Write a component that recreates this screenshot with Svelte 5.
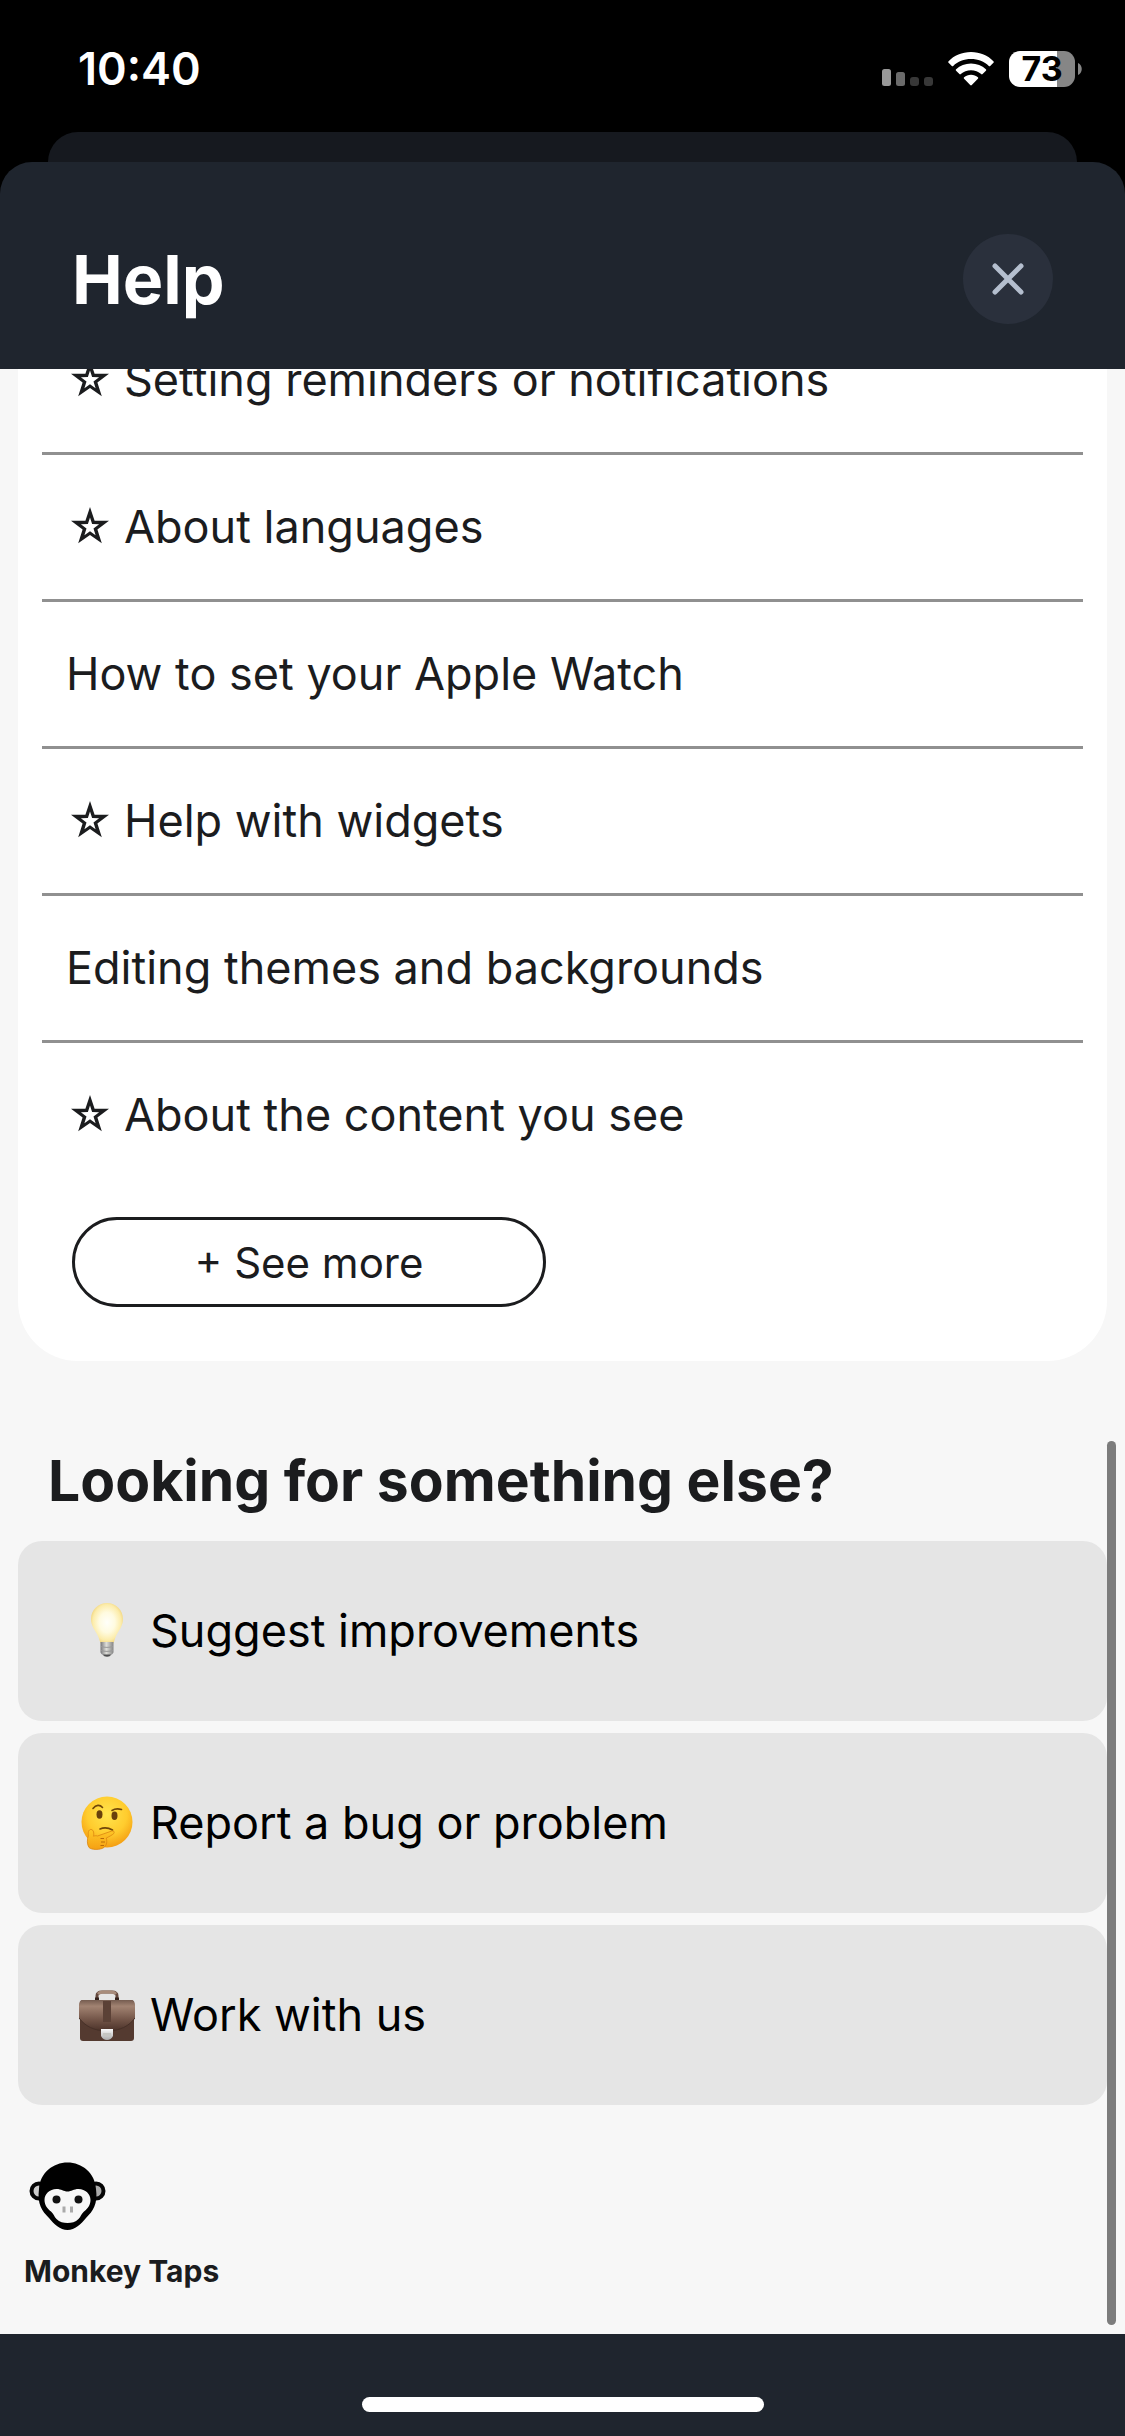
<script>
  const topics = [
    { label: 'Setting reminders or notifications', starred: true },
    { label: 'About languages', starred: true },
    { label: 'How to set your Apple Watch', starred: false },
    { label: 'Help with widgets', starred: true },
    { label: 'Editing themes and backgrounds', starred: false },
    { label: 'About the content you see', starred: true }
  ];
  const actions = [
    { label: 'Suggest improvements', icon: 'bulb' },
    { label: 'Report a bug or problem', icon: 'thinking' },
    { label: 'Work with us', icon: 'briefcase' }
  ];
</script>

<div class="screen">
  <div class="status">
    <time>10:40</time>
    <div class="indicators">
      <svg class="signal" viewBox="0 0 51 17" aria-hidden="true">
        <rect width="9" height="17" rx="2.5" fill="#999" />
        <rect x="14" y="3" width="9" height="14" rx="2.5" fill="#6b6b6b" />
        <rect x="28" y="8" width="9" height="9" rx="3" fill="#383838" />
        <rect x="42" y="8" width="9" height="9" rx="3" fill="#383838" />
      </svg>
      <svg class="wifi" viewBox="0 0 46 34" aria-hidden="true">
        <path fill="#fff" d="M23 0C14 0 6 3.500 .6 9.200a1 1 0 0 0 0 1.500l3.200 3.200a1 1 0 0 0 1.400 0C9.800 9.500 16 7 23 7s13.200 2.500 17.800 6.900a1 1 0 0 0 1.400 0l3.200-3.200a1 1 0 0 0 0-1.500C40 3.500 32 0 23 0Z" />
        <path fill="#fff" d="M23 11.500c-5.800 0-11 2.200-14.900 5.800a1 1 0 0 0 0 1.500l3.300 3.300a1 1 0 0 0 1.400 0c2.700-2.400 6.300-3.900 10.200-3.900s7.500 1.500 10.200 3.900a1 1 0 0 0 1.400 0l3.300-3.300a1 1 0 0 0 0-1.500C34 13.700 28.800 11.500 23 11.500Z" />
        <path fill="#fff" d="M23 22.800c-2.700 0-5.100.9-6.900 2.500a1 1 0 0 0 0 1.500l6.100 6.300a1.100 1.100 0 0 0 1.600 0l6.100-6.300a1 1 0 0 0 0-1.500c-1.800-1.600-4.200-2.500-6.900-2.500Z" />
      </svg>
      <div class="battery">
        <span class="charge">73</span>
        <svg class="nub" viewBox="0 0 4 12" aria-hidden="true"><path d="M0 0c5 2 5 10 0 12Z" fill="#868686" /></svg>
      </div>
    </div>
  </div>

  <div class="behind"></div>

  <div class="sheet">
    <header>
      <h1>Help</h1>
      <button class="close" aria-label="Close">
        <svg viewBox="0 0 32 32" aria-hidden="true"><path d="M3 3 29 29M29 3 3 29" stroke="#b4bece" stroke-width="5" stroke-linecap="round" /></svg>
      </button>
    </header>

    <main>
      <section class="topics">
        <ul>
          {#each topics as topic}
            <li>
              <a href="#topic">
                {#if topic.starred}
                  <svg class="star" viewBox="0 0 38 40" aria-hidden="true">
                    <path fill="#1b1c1e" fill-rule="evenodd" d="M19 0 23.600 13.700 38 13.800 26.400 22.400 30.800 36.300 19 27.900 7.200 36.300 11.600 22.400 0 13.800 14.400 13.700ZM19 10.400 16.900 17.100 9.900 17.200 15.500 21.400 13.400 28.200 19 24.200 24.600 28.200 22.500 21.400 28.100 17.200 21.100 17.100Z" />
                  </svg>
                {/if}
                <span>{topic.label}</span>
              </a>
            </li>
          {/each}
        </ul>
        <button class="more">+ See more</button>
      </section>

      <h2>Looking for something else?</h2>

      <nav>
        {#each actions as action}
          <a class="action" href="#contact">
            <svg class="emoji" viewBox="0 0 56 56" aria-hidden="true">
              {#if action.icon === 'bulb'}
                <defs>
                  <radialGradient id="glass" cx=".5" cy=".48" r=".55">
                    <stop offset="0" stop-color="#fffffa" /><stop offset=".45" stop-color="#fffbe0" /><stop offset=".8" stop-color="#fcecaa" /><stop offset="1" stop-color="#efd178" />
                  </radialGradient>
                  <linearGradient id="screw"><stop offset="0" stop-color="#77777a" /><stop offset=".45" stop-color="#deded9" /><stop offset="1" stop-color="#858585" /></linearGradient>
                </defs>
                <path fill="url(#glass)" d="M28 0c-9 0-16 7-16 16 0 7 4 11 7 17 1.500 3 1.500 6 3 7.500h12c1.500-1.500 1.500-4.500 3-7.500 3-6 7-10 7-17C44 7 37 0 28 0Z" />
                <path fill="url(#screw)" d="M21.500 39h13v10c0 2-3 3-4 4.500h-5C24.500 52 21.500 51 21.500 49Z" />
                <path d="M22 43.500c4 1.200 8 1.200 12 0M22 47.500c4 1.200 8 1.200 12 0" stroke="#999" fill="none" />
                <path fill="#4e4e50" d="M24 51.500h8c-1.500 3-6.500 3-8 0Z" />
              {:else if action.icon === 'thinking'}
                <defs>
                  <radialGradient id="face" cx=".5" cy=".35" r=".65">
                    <stop offset="0" stop-color="#ffe44d" /><stop offset=".6" stop-color="#ffcc2e" /><stop offset="1" stop-color="#f49d12" />
                  </radialGradient>
                  <linearGradient id="hand" x2="0" y2="1"><stop offset="0" stop-color="#ffc928" /><stop offset="1" stop-color="#f5a013" /></linearGradient>
                </defs>
                <circle cx="28" cy="27" r="25.500" fill="url(#face)" />
                <ellipse cx="20.500" cy="19.500" rx="3" ry="4.200" fill="#68400c" />
                <ellipse cx="35.500" cy="20.800" rx="3" ry="4.200" fill="#68400c" />
                <g fill="none" stroke="#704609" stroke-width="1.600" stroke-linecap="round">
                  <path d="M14 13.500c3-4 7-4 9.500-1M33 15.500c3-2 6-2 9.500-1M21 34c4-1.800 9-1 12.500 1" />
                </g>
                <path fill="url(#hand)" stroke="#dc8510" stroke-width=".8" d="M12 34.500c-2.500 0-3 3-2.600 6-1.500 4-1.400 9 .6 12 3 2.500 9 2.300 13 1 3-1 4.500-3.500 4.800-6.500.2-1.500-.3-3-.5-4 3-1.500 6-3 7.500-4.500 1.200-1.800-.3-3-2-2.500L18.500 41c-1-.5-3-.3-4 .2.500-2 .5-6.700-2.500-6.700Z" />
                <path d="M25 43.500h-3.500M26 47h-4M25 50.500h-3.500" stroke="#b96a08" fill="none" />
              {:else}
                <defs>
                  <linearGradient id="leather" x2="0" y2="1"><stop offset="0" stop-color="#755c50" /><stop offset=".2" stop-color="#a28372" /><stop offset=".65" stop-color="#715346" /><stop offset="1" stop-color="#4b3229" /></linearGradient>
                  <linearGradient id="clasp" x2="0" y2="1"><stop offset="0" stop-color="#fafafa" /><stop offset="1" stop-color="#aaa" /></linearGradient>
                </defs>
                <path d="M18 13V9q0-4 5-4h10q5 0 5 4v4" fill="none" stroke="#64493e" stroke-width="3" />
                <path d="M19 7q2-2 5-2h8q3 0 5 2" fill="none" stroke="#a88c7b" stroke-width="3" />
                <path d="M16 10.500h4v4h-4zM36 10.500h4v4h-4z" fill="#35231d" />
                <rect x="1" y="13" width="54" height="41" rx="3" fill="#543a30" />
                <path d="M3 13h50q3 1 3 5v13c-6 8-15 13-28 13S6 39 0 31V18q0-4 3-5Z" fill="url(#leather)" />
                <path d="M0 31c6 8 15 13 28 13s22-5 28-13" fill="none" stroke="#463027" />
                <path d="M24 14h8v21h-8z" fill="#5b4136" />
                <path d="M22 42h12v7q-2 4-6 4t-6-4z" fill="url(#clasp)" />
                <path d="M24 46h8v3h-8z" fill="#c6c6c2" />
              {/if}
            </svg>
            <span>{action.label}</span>
          </a>
        {/each}
      </nav>

      <footer>
        <svg class="monkey" viewBox="0 0 78 70" role="img" aria-label="Monkey">
          <circle cx="10" cy="29" r="7.500" fill="#ccc" stroke="#050505" stroke-width="4" />
          <circle cx="67" cy="29" r="7.500" fill="#aaa" stroke="#050505" stroke-width="4" />
          <path fill="#000" d="M38.500 .5C24 .5 11 11 10 27c-2 15 3 22 10 29 5 6 11 12 18.500 12S52 62 57 56c7-7 12-14 10-29C66 11 53 .5 38.500 .5Z" />
          <path fill="#f7f7f7" d="M38.500 29.500c-4 0-6-2.500-11-2.500-7 0-12 5-12 11 0 5 3 9 6.500 11.500 3 2.500 3 5 5.500 7.500 3 3 7 4 11 4s8-1 11-4c2.500-2.500 2.500-5 5.500-7.500 3.500-2.500 6.500-6.500 6.500-11.500 0-6-5-11-12-11-5 0-7 2.500-11 2.500Z" />
          <circle cx="27.500" cy="37.500" r="4" fill="#111" /><circle cx="49.500" cy="37.500" r="4" fill="#111" />
          <path d="M35 44.500v6M42.500 44.500v6" stroke="#aaa" stroke-width="3" />
        </svg>
        <strong>Monkey Taps</strong>
      </footer>
      <div class="scrollbar"></div>
    </main>

    <div class="home"><span></span></div>
  </div>
</div>

<style>
  :global(body) { margin: 0; background: #000; }
  .screen, .screen * { box-sizing: border-box; }
  .screen {
    height: 100vh;
    display: flex;
    flex-direction: column;
    font-family: Inter, "Liberation Sans", sans-serif;
    color: #1b1c1e;
    background: #000;
  }
  a { color: inherit; text-decoration: none; }
  button { font: inherit; color: inherit; padding: 0; }
  svg { display: block; flex: none; fill: none; }

  .status {
    flex: none;
    height: 132px;
    padding: 6px 43px 0 78px;
    display: flex;
    align-items: center;
    justify-content: space-between;
    color: #fff;
  }
  time { font-size: 45px; font-weight: 600; line-height: 54px; }
  .indicators { display: flex; align-items: center; gap: 15px; }
  .signal { width: 51px; height: 17px; margin-top: 16px; }
  .wifi { width: 46px; height: 34px; }
  .battery { display: flex; align-items: center; gap: 3px; }
  .charge {
    width: 66px;
    height: 36px;
    border-radius: 11px;
    background: linear-gradient(90deg, #fff 73%, #868686 73%);
    color: #000;
    font-size: 34px;
    font-weight: 700;
    line-height: 36px;
    text-align: center;
  }
  .nub { width: 4px; height: 12px; }

  .behind {
    flex: none;
    height: 30px;
    margin: 0 48px;
    border-radius: 30px 30px 0 0;
    background: #16191f;
  }
  .sheet {
    flex: 1;
    min-height: 0;
    display: flex;
    flex-direction: column;
    border-radius: 32px 32px 0 0;
    background: #1f252e;
  }
  header {
    flex: none;
    height: 207px;
    padding: 27px 72px 0;
    display: flex;
    align-items: center;
    justify-content: space-between;
    color: #fff;
  }
  h1 { margin: 0; font-size: 68px; font-weight: 700; line-height: 90px; }
  .close {
    width: 90px;
    height: 90px;
    display: grid;
    place-items: center;
    border: 0;
    border-radius: 50%;
    background: #2a303c;
  }
  .close svg { width: 32px; height: 32px; }

  main {
    position: relative;
    flex: 1;
    min-height: 0;
    display: flex;
    flex-direction: column;
    justify-content: flex-end;
    overflow: hidden;
    padding: 0 18px;
    background: #f7f7f7;
  }
  main > * { flex: none; }
  .topics {
    padding: 0 24px 54px;
    border-radius: 0 0 60px 60px;
    background: #fff;
  }
  ul { list-style: none; margin: 0; padding: 0; }
  li { border-bottom: 3px solid #909090; }
  li:last-child { border-bottom: 0; }
  li a {
    height: 144px;
    padding: 0 24px;
    display: flex;
    align-items: center;
    font-size: 45px;
    line-height: 54px;
  }
  .star { width: 38px; height: 40px; margin: 0 15px 0 5px; }
  .more {
    display: block;
    width: 474px;
    height: 90px;
    margin: 30px 0 0 30px;
    border: 3px solid #1b1c1e;
    border-radius: 45px;
    background: none;
    font-size: 42px;
  }
  h2 {
    margin: 84px 30px 24px;
    font-size: 57px;
    font-weight: 700;
    line-height: 72px;
  }
  nav { display: grid; gap: 12px; }
  .action {
    height: 180px;
    padding: 0 61px;
    display: flex;
    align-items: center;
    gap: 15px;
    border-radius: 24px;
    background: #e5e5e5;
    color: #000;
    font-size: 45px;
    line-height: 54px;
  }
  .emoji { width: 56px; height: 56px; }
  footer { padding: 57px 6px 45px; }
  .monkey { width: 78px; height: 70px; margin: 0 0 21px 5px; }
  strong { display: block; font-size: 30px; font-weight: 700; line-height: 36px; }
  .scrollbar {
    position: absolute;
    right: 9px;
    bottom: 9px;
    width: 9px;
    height: 45%;
    border-radius: 5px;
    background: #7c7c7c;
  }
  .home {
    flex: none;
    height: 102px;
    padding-bottom: 24px;
    display: flex;
    align-items: flex-end;
    justify-content: center;
  }
  .home span { width: 402px; height: 15px; border-radius: 8px; background: #fff; }
</style>
